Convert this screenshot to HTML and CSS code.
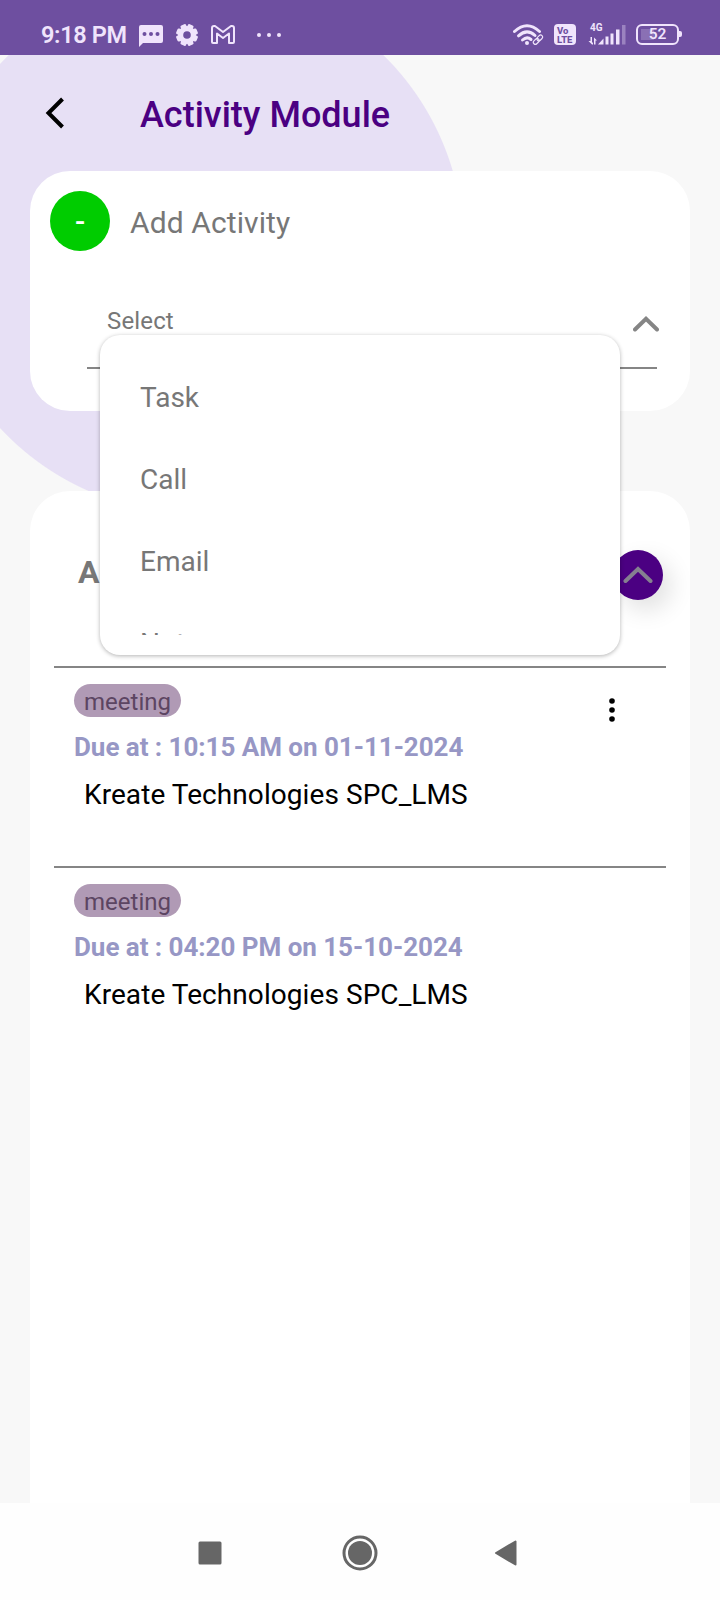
FILE: index.html
```html
<!DOCTYPE html>
<html lang="en">
<head>
    <meta charset="UTF-8">
    <meta name="viewport" content="width=device-width, initial-scale=1.0">
    <title>Activity Module</title>
    <link rel="stylesheet" href="styles.css">
</head>
<body>
    <div class="status-bar">
        <span class="clock">9:18 PM</span>
        <svg class="icon-message" width="24" height="22" viewBox="0 0 24 22">
            <path fill="#f0e4fc" d="M2 0H22Q24 0 24 2V16Q24 18 22 18H4L0 22V2Q0 0 2 0Z"/>
            <g fill="#6e4fa0"><circle cx="5.5" cy="9" r="2"/><circle cx="12" cy="9" r="2"/><circle cx="18.500" cy="9" r="2"/></g>
        </svg>
        <svg class="icon-gear" width="22" height="22" viewBox="-11 -11 22 22">
            <g fill="#f0e4fc">
                <circle r="9"/>
                <rect x="-3" y="-11" width="6" height="22" rx="1.500" transform="rotate(22.500)"/>
                <rect x="-3" y="-11" width="6" height="22" rx="1.500" transform="rotate(67.500)"/>
                <rect x="-3" y="-11" width="6" height="22" rx="1.500" transform="rotate(112.500)"/>
                <rect x="-3" y="-11" width="6" height="22" rx="1.500" transform="rotate(157.500)"/>
            </g>
            <circle r="3.800" fill="#6e4fa0"/>
        </svg>
        <svg class="icon-mail" width="24" height="19" viewBox="0 0 24 19" fill="none" stroke="#f0e4fc" stroke-width="2" stroke-linejoin="round">
            <path d="M1 17V3Q1 1 3 1H4L12 7L20 1H21Q23 1 23 3V17Q23 18 22 18H18V8.500L12 13L6 8.500V18H2Q1 18 1 17Z"/>
        </svg>
        <svg class="icon-more" width="24" height="4" viewBox="0 0 24 4" fill="#f0e4fc"><circle cx="2" cy="2" r="2"/><circle cx="12" cy="2" r="2"/><circle cx="22" cy="2" r="2"/></svg>
        <div class="status-right">
            <svg width="32" height="22" viewBox="0 0 32 22" fill="none" stroke="#f0e4fc" stroke-linecap="round">
                <g stroke-width="3">
                    <path d="M1.500 7.500Q14 -4 26.500 7.500"/>
                    <path d="M5.500 11.800Q14 4 22 11.500"/>
                    <path d="M9.500 16Q14 12 18 15.500"/>
                </g>
                <circle cx="14" cy="19" r="2" fill="#f0e4fc" stroke="none"/>
                <g stroke-width="1.200">
                    <rect x="20" y="15.500" width="6.500" height="4" rx="2" transform="rotate(-45 23.200 17.500)"/>
                    <rect x="23.500" y="12" width="6.500" height="4" rx="2" transform="rotate(-45 26.700 14)"/>
                </g>
            </svg>
            <div class="volte"><span>Vo</span><span>LTE</span></div>
            <div class="signal">
                <span class="network">4G</span>
                <svg width="38" height="22" viewBox="0 0 38 22" fill="#f0e4fc">
                    <path d="M2.500 13H4V18.500H5V20.500H4L0.500 17H2.500ZM6 20.500V13.500L9 16.500H7.500V20.500Z"/>
                    <path d="M10 20.500L15.500 14.500V20.500Z"/>
                    <rect x="17.500" y="12.500" width="3" height="8"/>
                    <rect x="22.500" y="9.500" width="3" height="11"/>
                    <rect x="28" y="5.500" width="3.500" height="15"/>
                    <rect x="34" y="1" width="3.500" height="19.500" opacity="0.35"/>
                </svg>
            </div>
            <div class="battery"><span class="battery-level">52</span></div>
        </div>
    </div>

    <div class="screen">
        <div class="header">
            <svg width="20" height="32" viewBox="0 0 20 32" fill="none" stroke="#000" stroke-width="4"><path d="M17.500 2L3.500 16L17.500 30"/></svg>
            <h1>Activity Module</h1>
        </div>

        <div class="card add-card">
            <div class="add-row">
                <div class="add-button">-</div>
                <span class="add-label">Add Activity</span>
            </div>
            <div class="select">
                <span class="select-label">Select</span>
                <svg width="26" height="16" viewBox="0 0 26 16" fill="none" stroke="#858585" stroke-width="4" stroke-linecap="round"><path d="M2 13.500L13 2.800L24 13.500"/></svg>
                <div class="menu">
                    <div class="menu-list">
                        <div class="menu-item">Task</div>
                        <div class="menu-item">Call</div>
                        <div class="menu-item">Email</div>
                        <div class="menu-item">Note</div>
                    </div>
                </div>
            </div>
        </div>

        <div class="card list-card">
            <div class="list-header">
                <h2>A</h2>
                <div class="toggle">
                    <svg width="30" height="18" viewBox="0 0 30 18" fill="none" stroke="#858090" stroke-width="4" stroke-linecap="round"><path d="M2.500 15L15 3L27.500 15"/></svg>
                </div>
            </div>
            <div class="activity">
                <div class="activity-body">
                    <span class="badge">meeting</span>
                    <div class="due">Due at : 10:15 AM on 01-11-2024</div>
                    <div class="company">Kreate Technologies SPC_LMS</div>
                </div>
                <svg class="kebab" width="6" height="24" viewBox="0 0 6 24"><circle cx="3" cy="3" r="2.800"/><circle cx="3" cy="12" r="2.800"/><circle cx="3" cy="21" r="2.800"/></svg>
            </div>
            <div class="activity">
                <div class="activity-body">
                    <span class="badge">meeting</span>
                    <div class="due">Due at : 04:20 PM on 15-10-2024</div>
                    <div class="company">Kreate Technologies SPC_LMS</div>
                </div>
            </div>
        </div>
    </div>

    <div class="nav-bar">
        <svg width="24" height="24" viewBox="0 0 24 24"><rect x="0.500" y="0.500" width="23" height="23" rx="1.500" fill="#666"/></svg>
        <svg class="nav-home" width="36" height="36" viewBox="0 0 36 36"><circle cx="18" cy="18" r="16" fill="none" stroke="#666" stroke-width="3"/><circle cx="18" cy="18" r="12" fill="#666"/></svg>
        <svg width="24" height="28" viewBox="0 0 24 28"><path d="M2 14L21.500 2.500V25.500Z" fill="#666" stroke="#666" stroke-width="2" stroke-linejoin="round"/></svg>
    </div>
</body>
</html>
```
FILE: styles.css
```css
* {
    box-sizing: border-box;
}
body {
    font-family: Roboto, "Liberation Sans", sans-serif;
    background-color: #f8f8f8;
    color: #777777;
    margin: 0;
    height: 1600px;
    display: flex;
    flex-direction: column;
    overflow: hidden;
}
svg {
    display: block;
    flex: none;
}
.status-bar {
    height: 55px;
    padding: 14px 37px 0 41px;
    background-color: #6e4fa0;
    color: #f0e4fc;
    display: flex;
    align-items: center;
}
.clock {
    width: 98px;
    font-size: 23.5px;
    font-weight: 600;
    letter-spacing: -0.35px;
    white-space: nowrap;
}
.icon-message {
    margin-top: 2px;
}
.icon-gear {
    margin-left: 13px;
}
.icon-mail {
    margin-left: 13px;
}
.icon-more {
    margin-left: 22px;
}
.status-right {
    margin-left: auto;
    display: flex;
    align-items: center;
}
.volte {
    width: 22px;
    height: 21px;
    margin: 0 12px 0 9px;
    padding: 2px 0 0 3px;
    border-radius: 4px;
    background-color: #f0e4fc;
    color: #6e4fa0;
    font-size: 9.5px;
    font-weight: 800;
    line-height: 9px;
    display: flex;
    flex-direction: column;
}
.signal {
    position: relative;
    margin-right: 10px;
}
.network {
    position: absolute;
    left: 2px;
    top: -1px;
    font-size: 10px;
    font-weight: 700;
    line-height: 10px;
}
.battery {
    position: relative;
    width: 43px;
    height: 21px;
    margin-right: 4px;
    border: 2.5px solid #f0e4fc;
    border-radius: 6px;
    display: flex;
}
.battery::after {
    content: "";
    position: absolute;
    left: 41px;
    top: 5px;
    width: 3px;
    height: 6px;
    border-radius: 0 2px 2px 0;
    background-color: #f0e4fc;
}
.battery-level {
    flex: 1;
    margin: 3px;
    background: linear-gradient(to right, #8a70b4 40%, transparent 40%);
    font-size: 15.5px;
    font-weight: 600;
    line-height: 11px;
    text-align: center;
}
.screen {
    height: 1448px;
    padding: 0 30px;
    overflow: hidden;
    background: radial-gradient(circle at 196px 191px, #e7e0f5 267px, #f8f8f8 268px);
    display: flex;
    flex-direction: column;
}
.header {
    height: 116px;
    padding-left: 15px;
    display: flex;
    align-items: center;
}
.header svg {
    margin-top: -1px;
}
.header h1 {
    margin: 4px 0 0 75px;
    color: #4b0082;
    font-size: 36px;
    font-weight: 500;
}
.card {
    background-color: #ffffff;
    border-radius: 40px;
    flex: none;
}
.add-card {
    height: 240px;
    padding: 20px 33px 0 20px;
}
.add-row {
    display: flex;
    align-items: center;
    gap: 20px;
}
.add-button {
    width: 60px;
    height: 60px;
    padding-top: 1px;
    border-radius: 50%;
    background-color: #00cc00;
    color: #ffffff;
    font-size: 30px;
    font-weight: 500;
    line-height: 60px;
    text-align: center;
}
.add-label {
    margin-top: 3px;
    font-size: 30px;
    letter-spacing: 0.1px;
}
.select {
    position: relative;
    height: 78px;
    margin: 40px 0 0 37px;
    padding: 0 0 17px 20px;
    border-bottom: 2px solid #858585;
    display: flex;
    align-items: center;
    justify-content: space-between;
}
.select-label {
    font-size: 24px;
    letter-spacing: 0.15px;
}
.select svg {
    margin: 6px -2px 0 0;
}
.menu {
    position: absolute;
    z-index: 2;
    left: 13px;
    top: 44px;
    width: 520px;
    height: 320px;
    padding: 20px 0;
    border-radius: 20px;
    background-color: #ffffff;
    box-shadow: 0 1px 4px rgba(0, 0, 0, 0.3);
}
.menu-list {
    height: 280px;
    overflow: hidden;
}
.menu-item {
    height: 82px;
    padding: 2px 40px 0;
    font-size: 28px;
    line-height: 82px;
}
.list-card {
    height: 1012px;
    margin-top: 80px;
    padding: 0 24px;
    border-radius: 40px 40px 0 0;
}
.list-header {
    height: 175px;
    padding: 0 3px 7px 24px;
    display: flex;
    align-items: center;
    justify-content: space-between;
}
.list-header h2 {
    margin: 0 0 6px;
    font-size: 32px;
    font-weight: 700;
}
.toggle {
    width: 50px;
    height: 50px;
    border-radius: 50%;
    background-color: #4b0082;
    box-shadow: 8px 10px 24px rgba(0, 0, 0, 0.12);
    display: flex;
    align-items: center;
    justify-content: center;
}
.activity {
    height: 200px;
    padding: 16px 51px 0 20px;
    border-top: 2px solid #858585;
    display: flex;
    justify-content: space-between;
}
.badge {
    display: block;
    width: 107px;
    height: 33px;
    border-radius: 17px;
    background-color: #b09ab5;
    color: #5c4562;
    font-size: 24px;
    line-height: 37px;
    text-align: center;
}
.due {
    margin-top: 14px;
    color: #9797c5;
    font-size: 26px;
    font-weight: 700;
    letter-spacing: -0.04px;
    line-height: 32px;
}
.company {
    margin: 16px 0 0 10px;
    color: #000000;
    font-size: 28px;
    letter-spacing: 0.07px;
    line-height: 32px;
}
.kebab {
    margin-top: 14px;
}
.nav-bar {
    height: 97px;
    padding: 2px 202px 0 198px;
    background-color: #fefefe;
    display: flex;
    align-items: center;
    justify-content: space-between;
}
.nav-home {
    margin-left: 3px;
}
```
